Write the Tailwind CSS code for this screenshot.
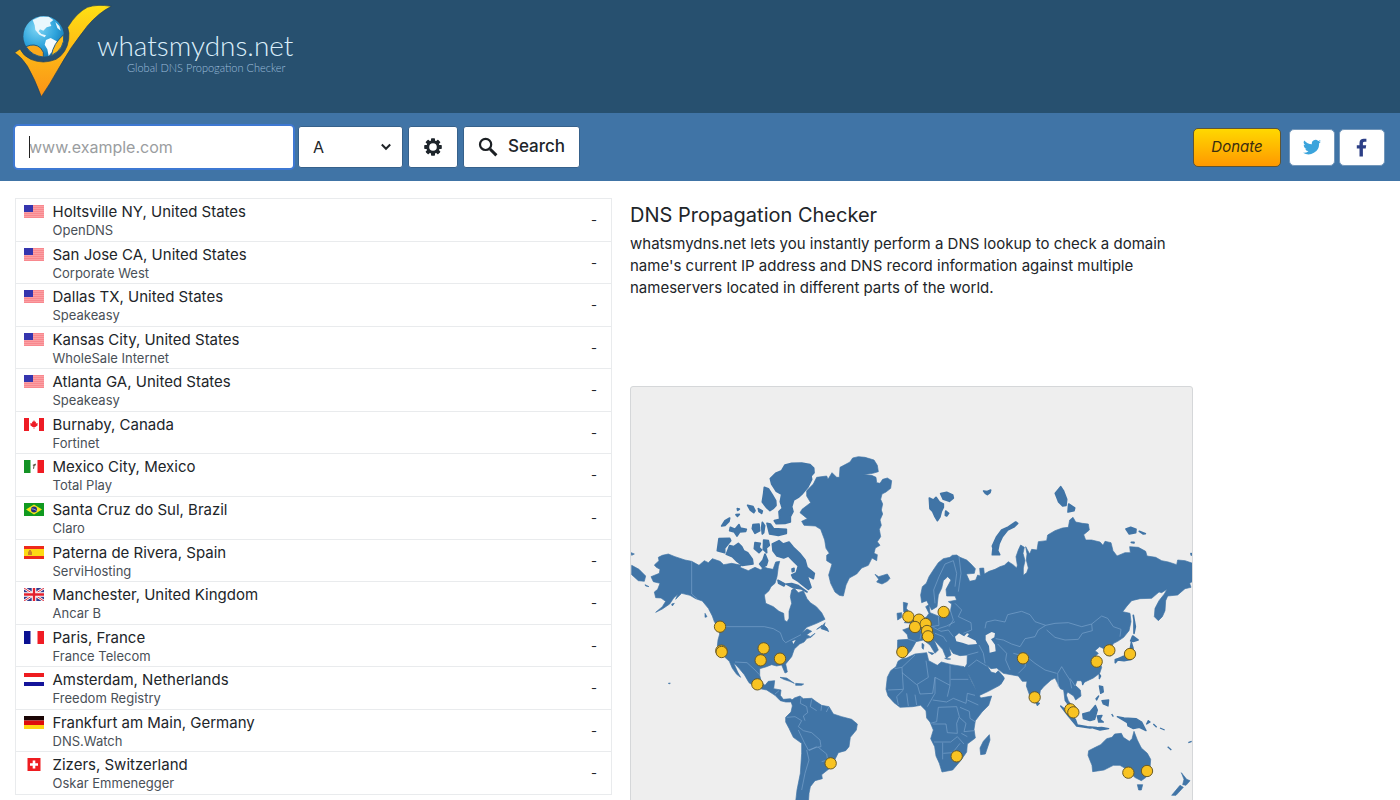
<!DOCTYPE html>
<html lang="en">
<head>
<meta charset="UTF-8">
<meta name="viewport" content="width=device-width, initial-scale=1">
<title>DNS Propagation Checker - whatsmydns.net</title>
<script src="https://cdn.jsdelivr.net/npm/@tailwindcss/browser@4"></script>
</head>
<body class="bg-white font-['Inter',sans-serif] text-[#212529]">

<!-- Header -->
<header class="h-[113px] bg-[#27506f]">
    <a href="#" class="inline-flex items-start pl-3 pt-1" aria-label="whatsmydns.net">
        <svg class="w-[100px] h-24" viewBox="36 12 300 288" aria-hidden="true">
            <defs>
                <linearGradient id="tick" x1="0" y1="0" x2="0" y2="1">
                    <stop offset="0" stop-color="#ffe014"/>
                    <stop offset="1" stop-color="#fb9217"/>
                </linearGradient>
                <radialGradient id="globe" cx=".35" cy=".3" r=".75">
                    <stop offset="0" stop-color="#7fd6f5"/>
                    <stop offset=".6" stop-color="#2fa4dc"/>
                    <stop offset="1" stop-color="#1277b4"/>
                </radialGradient>
            </defs>
            <path fill="url(#tick)" stroke="#1f405c" stroke-width="2" d="M44 158L60 147Q70 168 92 178Q130 194 168 178Q200 160 206 118Q209 98 203 82Q230 38 262 22Q290 12 334 19Q296 38 262 78Q210 142 172 212Q150 252 124 290Q104 236 82 198Q64 170 44 158Z"/>
            <circle cx="131" cy="109" r="61" fill="url(#globe)"/>
            <path fill="#e9f7fd" d="M98 60L120 50 146 50 160 60 150 68 154 78 140 82 130 92 120 88 116 94 124 102 138 106 134 112 118 104 106 90 104 76Z"/>
            <path fill="#f4fbfe" d="M138 120L152 114 170 124 176 134 164 150 152 160 146 168 142 148 134 134Z"/>
            <path fill="#e9f7fd" d="M166 66L178 78 182 92 172 84Z"/>
            <path fill="#fba91c" stroke="#24597f" stroke-width="3" d="M78 140Q104 128 122 144Q134 156 130 171Q96 168 78 140Z"/>
            <path fill="#fdbb1a" stroke="#24597f" stroke-width="3" d="M154 167Q160 130 191 104Q196 146 154 167Z"/>
        </svg>
        <span class="-ml-[15px] mt-6 flex flex-col items-end">
            <span class="font-['Lato',sans-serif] text-[28px] leading-[34px] font-light text-[#dbeefa]">whatsmydns.net</span>
            <span class="mr-2 font-['Lato',sans-serif] text-[11px] leading-3 font-light text-[#9dbddb]">Global DNS Propogation Checker</span>
        </span>
    </a>
</header>

<!-- Search bar -->
<div class="flex h-17 items-center justify-between bg-[#4074a6] px-[15px]">
    <form class="flex items-center gap-[5px]" onsubmit="return false">
        <div class="relative">
            <input type="text" aria-label="Domain name" placeholder="www.example.com" class="block h-[42px] w-[278px] rounded-[3px] bg-white px-3.5 text-base text-[#212529] shadow-[0_0_0_2px_#3e78d2] outline-none placeholder:text-[#9a9da0]">
            <span class="absolute left-3.5 top-2.5 h-5.5 w-px bg-[#222]"></span>
        </div>
        <div class="relative">
            <select aria-label="Record type" class="block h-[42px] w-[105px] appearance-none rounded-[3px] border border-[#36618b] bg-white px-3.5 text-base text-[#212529]">
                <option>A</option>
                <option>AAAA</option>
                <option>CNAME</option>
                <option>MX</option>
                <option>NS</option>
                <option>TXT</option>
            </select>
            <svg class="pointer-events-none absolute right-3 top-[17px] h-2 w-2.5" viewBox="0 0 10 8" fill="none" stroke="#212529" stroke-width="2" aria-hidden="true"><path d="M.8 1.5L5 5.8 9.2 1.5"/></svg>
        </div>
        <button type="button" aria-label="Options" class="flex h-[42px] w-[50px] items-center justify-center rounded-[3px] border border-[#36618b] bg-white">
            <svg class="size-[18px]" viewBox="-9 -9 18 18" aria-hidden="true">
                <g fill="#1e252b">
                    <rect x="-2" y="-8.8" width="4" height="17.6" rx=".8"/>
                    <rect x="-2" y="-8.8" width="4" height="17.6" rx=".8" transform="rotate(45)"/>
                    <rect x="-2" y="-8.8" width="4" height="17.6" rx=".8" transform="rotate(90)"/>
                    <rect x="-2" y="-8.8" width="4" height="17.6" rx=".8" transform="rotate(135)"/>
                    <circle r="6.7"/>
                </g>
                <circle r="3.8" fill="#fff"/>
            </svg>
        </button>
        <button type="submit" class="flex h-[42px] w-[117px] items-center justify-center gap-2.5 rounded-[3px] border border-[#36618b] bg-white text-[17px] font-medium text-[#212529]">
            <svg class="size-5" viewBox="0 0 20 20" fill="none" stroke="#1b1f23" aria-hidden="true"><circle cx="7.6" cy="7.4" r="5.6" stroke-width="2.2"/><path stroke-width="3" d="M12 12l6.400 6.400"/></svg>
            Search
        </button>
    </form>
    <div class="flex items-center gap-1">
        <button type="button" class="mr-1 h-[39px] w-[88px] rounded-[5px] border border-[#5f5534] bg-linear-to-b from-[#ffd800] to-[#ff9800] text-[15px] italic text-[#3a2e10]">Donate</button>
        <a href="#" aria-label="Twitter" class="flex h-[37px] w-[46px] items-center justify-center rounded-[5px] border border-[#7397ba] bg-white">
            <svg class="size-[18px]" viewBox="0 0 24 24" fill="#3ba4dc" aria-hidden="true"><path d="M24 4.6a10 10 0 0 1-2.8.8 4.900 4.900 0 0 0 2.200-2.700 9.900 9.900 0 0 1-3.100 1.200 4.920 4.920 0 0 0-8.400 4.500A14 14 0 0 1 1.700 3.200a4.900 4.900 0 0 0 1.500 6.500 4.900 4.900 0 0 1-2.200-.6v.1a4.900 4.900 0 0 0 3.900 4.800 5 5 0 0 1-2.200.1 4.900 4.900 0 0 0 4.600 3.400A9.900 9.900 0 0 1 0 19.500 14 14 0 0 0 21.500 7.100 10 10 0 0 0 24 4.600z"/></svg>
        </a>
        <a href="#" aria-label="Facebook" class="flex h-[37px] w-[46px] items-center justify-center rounded-[5px] border border-[#7397ba] bg-white">
            <svg class="h-[19px] w-3" viewBox="0 0 12 19" fill="#2c3f86" aria-hidden="true"><path d="M3.500 18.500V10.600H.8V7.300h2.700V4.900C3.500 2.100 5.200.7 7.800.7c1.200 0 2.300.1 2.600.1v3H8.600c-1.400 0-1.700.7-1.700 1.700v1.800h3.300l-.5 3.300H6.900v7.900z"/></svg>
        </a>
    </div>
</div>

<!-- Flags -->
<svg class="hidden" aria-hidden="true">
    <symbol id="us" viewBox="0 0 20 13"><path fill="#fba0a4" d="M0 0h20v13H0z"/><path stroke="#f8888e" d="M0 .5h20M0 2.500h20M0 4.500h20M0 6.500h20M0 8.500h20M0 10.500h20M0 12.500h20"/><path fill="#3535ae" d="M0 0h9v7H0z"/></symbol>
    <symbol id="ca" viewBox="0 0 20 13"><path fill="#fff" d="M0 0h20v13H0z"/><path fill="#ee1c25" d="M0 0h5v13H0zM15 0h5v13h-5zM10 2l1 2 1-.4-.2 2 2-.7-.5 1.500.7.6-2.600 2H10.300V11h-.6V9H8.600L6 7l.7-.6-.5-1.500 2 .7-.2-2 1 .4z"/></symbol>
    <symbol id="mx" viewBox="0 0 20 13"><path fill="#fff" d="M0 0h20v13H0z"/><path fill="#149225" d="M0 0h6.500v13H0z"/><path fill="#f01b22" d="M13.500 0H20v13h-6.500z"/><path fill="#5d5442" d="M8.500 5l3-1.500.5 1.500-1.500 1-.5 3-1-.5.500-2.500z"/></symbol>
    <symbol id="br" viewBox="0 0 20 13"><path fill="#119a20" d="M0 0h20v13H0z"/><path fill="#f5e51b" d="M10 1.500l8 5-8 5-8-5z"/><circle cx="10" cy="6.500" r="3" fill="#22307f"/><path d="M7.500 5.800q2.500 0 5 1.700" stroke="#dfe8f0" stroke-width=".6" fill="none"/></symbol>
    <symbol id="es" viewBox="0 0 20 13"><path fill="#ee2a1c" d="M0 0h20v13H0z"/><path fill="#fddb14" d="M0 3h20v7H0z"/><path fill="#c9812c" d="M4 5.500h4V9H4zM5 4h2v2H5z"/></symbol>
    <symbol id="gb" viewBox="0 0 20 13"><path fill="#333b8c" d="M0 0h20v13H0z"/><path stroke="#fff" stroke-width="2.600" d="M0 0l20 13M20 0L0 13"/><path stroke="#e0303f" d="M0 0l20 13M20 0L0 13"/><path stroke="#fff" stroke-width="4.600" d="M10 0v13M0 6.500h20"/><path stroke="#e3202e" stroke-width="2.400" d="M10 0v13M0 6.500h20"/></symbol>
    <symbol id="fr" viewBox="0 0 20 13"><path fill="#fff" d="M0 0h20v13H0z"/><path fill="#0a1192" d="M0 0h6.500v13H0z"/><path fill="#f01c24" d="M13.500 0H20v13h-6.500z"/></symbol>
    <symbol id="nl" viewBox="0 0 20 13"><path fill="#fff" d="M0 0h20v13H0z"/><path fill="#ee1c20" d="M0 0h20v4H0z"/><path fill="#14149a" d="M0 9h20v4H0z"/></symbol>
    <symbol id="de" viewBox="0 0 20 13"><path fill="#1a0505" d="M0 0h20v4.500H0z"/><path fill="#df0d0d" d="M0 4.500h20V9H0z"/><path fill="#fdd614" d="M0 9h20v4H0z"/></symbol>
    <symbol id="ch" viewBox="0 0 20 13"><path fill="#ee1c20" d="M3.500 0h13v13h-13z"/><path fill="#fff" d="M8.700 2.500h2.600v2.700H14v2.600h-2.700v2.700H8.700V7.800H6V5.200h2.700z"/></symbol>
</svg>

<main class="grid grid-cols-[597fr_563fr_174fr] items-start gap-[18px] px-[15px] pt-[17px]">
    <!-- DNS servers -->
    <table class="h-[597px] w-full border-collapse border border-[#e9ebed]">
        <tbody id="servers"></tbody>
    </table>

    <section class="pt-[3px]">
        <h1 class="text-xl leading-7">DNS Propagation Checker</h1>
        <p class="mt-1 mb-[87px] text-[15px] leading-[22px]">whatsmydns.net lets you instantly perform a DNS lookup to check a domain name's current IP address and DNS record information against multiple nameservers located in different parts of the world.</p>

        <!-- World map -->
        <div class="overflow-hidden rounded-[3px] border border-[#d5d7d9] bg-[#eeeeee]">
            <svg class="block w-full" viewBox="18 -159 1683 1245" role="img" aria-label="Map of DNS servers">
                <g fill="#4074a6" stroke="#4074a6" stroke-width="2" stroke-linejoin="round">
                    <!-- North America -->
                    <path d="M130 342L112 346 100 352 102 362 88 375 94 382 105 388 103 400 78 410 85 425 105 430 98 448 88 456 92 473 108 474 122 484 112 500 92 517 112 507 134 492 146 474 158 463 152 478 170 460 195 466 212 476 232 483 250 505 262 528 268 545 280 562 284 582 279 600 277 618 285 634 300 652 313 664 322 685 335 703 347 712 338 696 330 678 326 668 342 685 358 704 372 728 395 744 425 750 450 766 466 782 482 786 499 786 502 794 510 784 496 776 475 778 466 766 468 750 446 746 449 722 430 724 420 736 410 728 404 706 404 686 422 681 440 674 455 678 470 675 480 699 487 696 482 672 500 650 508 627 524 612 537 606 546 595 558 592 570 580 556 590 545 584 560 574 546 567 530 580 545 562 575 550 600 538 590 518 574 500 556 488 546 476 535 452 520 458 508 445 500 450 496 470 500 490 492 514 492 535 486 546 478 540 476 520 462 514 445 500 422 490 418 465 432 452 438 440 450 430 456 410 460 380 464 364 452 366 444 388 428 385 415 380 408 390 390 382 370 392 345 382 350 376 320 370 296 374 285 364 262 356 250 368 238 362 222 376 200 364 180 360 150 350Z"/>
                    <path d="M575 568L592 555 588 566 606 572 611 575 607 565 598 556 600 548 590 560ZM240 520L246 530 240 532ZM140 492L148 490 142 498Z"/>
                    <!-- Arctic islands -->
                    <path stroke-width="5" d="M480 75L500 70 530 69 555 74 566 84 567 98 558 108 560 118 548 142 533 160 520 172 506 180 500 200 504 215 496 230 496 246 480 250 454 251 448 242 464 238 462 215 472 205 466 185 470 163 454 154 440 132 436 116 452 100 470 92ZM418 142L430 146 442 165 452 182 453 196 444 206 435 212 424 202 412 186 416 160ZM426 250L436 252 446 266 484 268 484 280 460 286 434 282ZM282 296L314 295 317 302 299 325 299 338 277 332ZM314 317L326 320 340 310 350 320 356 332 368 338 382 358 384 372 352 376 336 364 322 350 304 343 309 330ZM442 312L462 302 474 312 492 306 505 322 524 340 540 360 546 382 568 400 565 416 546 406 552 424 558 442 550 448 532 434 520 424 504 414 500 405 514 398 520 378 506 364 490 348 476 354 456 348 444 332ZM316 262L330 268 342 254 346 264 364 268 362 274 344 276 336 288 328 276 314 272ZM290 258L300 242 314 234 312 244 300 256ZM384 254L402 252 404 272 390 280 382 266ZM368 196L384 200 390 212 386 218 376 210ZM400 206L412 213 410 220 402 215ZM390 308L406 310 402 322 410 330 402 338 388 326ZM416 300L430 302 433 316 424 324 425 338 415 328ZM420 342L428 362 424 376 412 382 404 372 414 360ZM412 247L419 257 416 278 412 282 410 262ZM337 206L343 207 338 211ZM333 224L343 223 337 229ZM501 387L507 385 507 393 502 395ZM459 421L480 432 477 438 461 430ZM484 432L500 431 520 437 546 456 530 447 505 443Z"/>
                    <path d="M20 376L42 388 62 408 58 424 40 422 20 404ZM18 338L28 342 20 346ZM60 434L72 440 62 438ZM130 730L136 729 133 732ZM465 712L485 714 508 730 494 724 476 718ZM512 730L536 732 530 736 512 736Z"/>
                    <!-- Greenland, Iceland, Svalbard -->
                    <g transform="translate(525 0)">
                        <path d="M158 54L175 50 195 52 222 60 232 76 235 95 218 100 190 104 215 106 228 112 230 128 240 130 248 118 262 114 275 122 272 145 258 156 246 162 242 178 248 192 244 210 248 222 240 240 244 256 238 268 242 290 232 305 240 316 226 324 222 340 232 344 230 362 216 354 205 376 185 384 170 402 148 414 138 435 130 468 118 466 105 456 92 430 86 405 96 372 80 362 80 346 88 340 78 325 74 300 62 268 46 258 12 256 5 244 22 236 0 218 6 208 32 188 20 168 20 152 40 132 50 112 80 108 84 118 96 98 110 112 118 112 120 82 150 66ZM225 403L236 410 262 402 270 415 262 424 246 432 230 426 236 418Z"/>
                        <path stroke-width="5" d="M388 174L400 180 408 172 418 186 430 192 430 202 424 214 420 230 412 242 404 228 398 214 390 206ZM422 161L440 157 458 165 460 174 448 184 430 178ZM437 213L446 220 440 228 436 226ZM551 153L560 155 572 150 570 158 562 164 556 160Z"/>
                    </g>
                    <!-- Eurasia -->
                    <path d="M887 465L892 440 904 430 912 410 925 390 940 368 955 356 975 352 982 346 995 345 1005 352 1025 360 1038 372 1051 386 1048 400 1024 402 1034 424 1052 420 1058 405 1066 408 1064 385 1076 384 1078 402 1092 394 1110 388 1125 380 1138 376 1150 365 1164 374 1175 384 1177 376 1173 350 1180 330 1187 315 1198 322 1194 340 1200 362 1195 384 1195 406 1205 398 1210 384 1204 360 1206 342 1202 320 1214 342 1220 328 1236 330 1240 305 1265 302 1268 285 1290 272 1312 264 1330 262 1334 240 1344 232 1352 246 1372 250 1390 252 1393 270 1376 284 1382 300 1400 300 1425 306 1434 316 1440 304 1458 308 1464 332 1476 348 1500 338 1516 338 1514 320 1540 322 1562 334 1566 348 1592 352 1610 362 1630 366 1655 374 1658 360 1680 362 1703 370 1703 424 1694 430 1698 442 1680 446 1658 465 1628 468 1622 482 1620 512 1612 530 1600 542 1588 530 1590 505 1602 482 1618 462 1626 448 1610 458 1602 456 1580 475 1545 476 1520 482 1506 498 1493 515 1515 520 1518 545 1512 572 1496 592 1478 604 1466 610 1458 622 1468 640 1456 648 1444 645 1440 628 1424 620 1410 632 1420 640 1412 648 1424 665 1430 682 1424 700 1405 714 1375 728 1368 722 1356 722 1351 736 1366 750 1368 768 1352 780 1346 768 1328 756 1324 765 1330 782 1340 796 1336 804 1320 782 1316 750 1306 746 1298 730 1290 714 1278 720 1256 740 1246 752 1242 778 1230 790 1216 772 1204 738 1206 724 1192 724 1180 708 1135 700 1115 684 1098 686 1086 676 1098 696 1112 700 1120 692 1137 712 1124 736 1090 754 1060 768 1048 738 1032 706 1018 684 1026 672 1027 645 1005 647 984 640 972 622 978 645 964 655 953 628 927 600 940 630 930 640 915 615 895 600 873 605 858 632 845 645 830 650 817 640 818 600 850 598 847 584 833 570 855 562 870 548 890 540 905 530 912 520 902 500 912 494 915 518 945 530 976 515 980 492 970 485 995 480 990 468 965 468 963 448 978 420 968 410 955 422 950 445 940 465 936 500 920 510 905 482 890 488Z"/>
                    <!-- British Isles -->
                    <path d="M835 487L848 490 844 505 860 525 870 540 862 550 838 548 850 535 836 515ZM816 520L830 518 830 532 818 540Z"/>
                    <path stroke-width="5" d="M1102 344L1104 325 1102 318 1114 292 1130 270 1150 261 1172 246 1178 250 1168 260 1148 270 1132 290 1122 312 1118 332 1124 344Z"/>
                    <!-- Siberian islands and Far East -->
                    <g transform="translate(1125 0)">
                        <path stroke-width="5" d="M182 140L190 152 200 178 198 196 188 198 176 186 166 160ZM206 192L224 204 222 212 204 216ZM378 267L392 262 408 268 407 278 388 282ZM418 274L436 281 430 282ZM394 307L402 307 402 309ZM400 526L406 560 402 580 402 540ZM398 588L414 600 400 604 392 603ZM394 608L399 625 393 658 372 662 347 659 368 650 388 645ZM346 659L351 662 346 668ZM573 341L577 342 574 345Z"/>
                        <path stroke-width="4" d="M246 720L252 726 248 734ZM298 702L302 708 298 716ZM298 738L308 740 310 756 302 760ZM306 782L326 780 324 798 310 792ZM288 776L296 768 290 780ZM108 786L118 790 112 796ZM0 708L12 716 2 732ZM182 798L205 815 226 838 232 855 262 860 290 862 270 864 230 858 205 828ZM248 822L270 816 286 796 292 810 284 838 270 842 250 836ZM292 828L306 826 300 838 310 846 296 846ZM280 864L305 862 326 866 300 870ZM352 830L372 834 408 836 425 846 438 872 418 862 400 866 384 858 382 848ZM445 842L450 846 440 852Z"/>
                        <path d="M335 822L340 830M460 852L470 862M480 864L494 870M503 920L514 930M565 908L575 904" fill="none" stroke-width="4"/>
                        <!-- Australia and New Zealand -->
                        <path d="M266 932L286 922 302 914 320 896 336 892 344 882 364 880 370 892 388 904 396 896 402 874 412 900 424 924 442 940 452 958 450 985 438 1012 424 1022 404 1012 384 990 360 976 340 976 312 990 278 995 276 976 264 946ZM412 1034L428 1034 424 1050 416 1050ZM544 998L560 1018 570 1022 558 1036 548 1034 552 1018ZM540 1036L550 1042 528 1066 515 1066Z"/>
                    </g>
                    <!-- South America -->
                    <g transform="translate(0 480)">
                        <path d="M499 302L508 294 525 288 535 296 560 295 575 306 590 316 612 320 625 342 650 350 680 358 697 372 694 390 676 412 672 440 662 452 640 458 628 482 618 502 600 516 590 524 592 536 570 542 556 560 552 580 548 640 508 640 516 570 526 520 530 460 530 430 505 412 492 385 482 366 482 352 498 336 502 318Z"/>
                    </g>
                    <!-- Africa and Madagascar -->
                    <g transform="translate(705 450)">
                        <path d="M126 206L140 204 165 192 200 188 206 212 232 226 244 216 275 224 312 230 322 246 335 275 352 306 362 324 395 318 386 346 366 366 346 392 342 418 346 444 322 462 320 486 302 512 278 540 246 546 238 520 228 498 224 470 212 446 220 420 210 396 200 384 198 362 182 346 158 350 120 352 102 338 84 318 78 298 82 262 92 242 108 230 114 214ZM388 434L390 450 376 492 362 494 360 474 370 454ZM186 160L192 164 190 178 186 174ZM205 186L222 190 216 194ZM254 205L272 207 262 208Z"/>
                    </g>
                </g>
                <g fill="#eeeeee">
                    <path d="M994 604L990 590 1002 580 1016 588 1028 590 1052 602 1056 612 1030 614 1012 608ZM1018 588L1026 580 1032 582 1026 590ZM1082 586L1100 576 1110 580 1108 592 1098 598 1110 614 1112 634 1094 638 1092 618 1082 600Z"/>
                    <path d="M472 424L480 428 476 420ZM505 612L512 600 502 604Z"/>
                </g>
                <!-- Borders -->
                <g fill="none" stroke="#7ea6cf" stroke-opacity=".75" stroke-width="2.500" stroke-linejoin="round">
                    <path d="M200 364V462L218 478M300 560H418L445 566 466 578 474 600 482 608 505 596 528 584M330 666L366 668 390 690 403 704M450 762L462 752"/>
                    <path d="M528 772L526 790 545 800 548 818 535 828 540 842M560 778L556 800 575 812M590 796L588 812M612 800L604 816M485 832L510 830 530 842 520 860 535 872 560 878 585 900 588 920 575 922 550 930 538 908 520 870M545 930L552 960 540 1000 530 1050M580 922L605 942 608 960 590 965M552 932L575 920"/>
                    <path d="M930 490L926 450 942 410 960 372 985 362M985 362L995 400 990 440M1002 350L1008 400 1000 455M940 530L942 556 918 560M975 508L985 540 972 560M990 490L1010 510 1000 530 1038 548 1040 570 1015 580M990 545L965 558 940 566M925 562L948 574 970 570 985 590M930 580L955 590 965 605M870 560L890 575 885 598M850 598L872 604"/>
                    <path d="M1080 565L1084 546 1110 540 1140 546 1148 524 1190 514 1215 524 1230 545 1262 556 1240 570 1230 590 1200 596 1185 620 1160 612 1135 600 1112 596M1262 556L1290 550 1330 548 1370 560 1400 552 1402 572 1372 580 1360 598 1320 600 1290 592 1265 570M1400 552L1430 528 1448 535 1465 560 1488 568 1485 590M1118 612L1145 640 1142 660 1155 690M1165 640L1205 650 1200 680 1180 700M1205 650L1230 670 1260 690 1295 700M1062 615L1075 640 1080 670M1027 645L1060 636M1030 680L1055 660 1085 678M1300 740L1298 700 1310 680 1322 700 1335 720 1340 745M1335 715L1350 738"/>
                    <g transform="translate(705 450)">
                        <path d="M104 236L126 232 165 195M126 232L130 298 84 300M126 248L170 284 205 262 198 212M172 284L180 312 218 310 225 262 270 286 270 226M225 262V310L202 350M272 268H325M130 300L110 320 115 345M140 310L145 348M165 314L170 345M218 330L260 336 280 325 318 340 322 310 345 316M270 286L262 320M235 352L230 395 212 400M235 352L290 350 298 380 290 400 292 430 262 428 258 402 218 402M300 352L328 364 330 385 345 395M298 382L318 400 312 425 342 422M222 456H272L292 440 312 462M248 458V508M250 490L278 488 300 460M322 330L355 345M322 440L304 430"/>
                    </g>
                </g>
                <!-- Servers -->
                <g id="pins" fill="#f8c322" stroke="#6b5a24" stroke-width="3"></g>
            </svg>
        </div>
    </section>
</main>

<script>
const servers = [
    ['us', 'Holtsville NY, United States', 'OpenDNS'],
    ['us', 'San Jose CA, United States', 'Corporate West'],
    ['us', 'Dallas TX, United States', 'Speakeasy'],
    ['us', 'Kansas City, United States', 'WholeSale Internet'],
    ['us', 'Atlanta GA, United States', 'Speakeasy'],
    ['ca', 'Burnaby, Canada', 'Fortinet'],
    ['mx', 'Mexico City, Mexico', 'Total Play'],
    ['br', 'Santa Cruz do Sul, Brazil', 'Claro'],
    ['es', 'Paterna de Rivera, Spain', 'ServiHosting'],
    ['gb', 'Manchester, United Kingdom', 'Ancar B'],
    ['fr', 'Paris, France', 'France Telecom'],
    ['nl', 'Amsterdam, Netherlands', 'Freedom Registry'],
    ['de', 'Frankfurt am Main, Germany', 'DNS.Watch'],
    ['ch', 'Zizers, Switzerland', 'Oskar Emmenegger']
];

document.getElementById('servers').innerHTML = servers.map(([flag, place, provider]) => `
    <tr class="border-b border-[#e9ebed]">
        <td class="w-[37px] pl-2 pt-1.5 align-top"><svg class="block h-[13px] w-5"><use href="#${flag}"/></svg></td>
        <td class="pt-[3px] align-top">
            <div class="text-[15px] leading-5">${place}</div>
            <div class="text-[13px] leading-4 text-[#495057]">${provider}</div>
        </td>
        <td class="w-10 pr-3.5 pt-0.5 text-right text-[13px]">-</td>
    </tr>`).join('');

const pins = [
    [285, 560], [289, 632], [290, 636], [416, 625], [407, 661], [465, 656], [397, 733], [617, 970],
    [850, 530], [882, 539], [870, 561], [902, 552], [906, 573], [909, 589], [956, 516], [832, 636],
    [995, 949], [1194, 655], [1229, 772], [1336, 808], [1345, 817], [1415, 665], [1453, 631],
    [1515, 642], [1510, 998], [1566, 993]
];

document.getElementById('pins').innerHTML = pins.map(([x, y]) => `<circle cx="${x}" cy="${y}" r="17"/>`).join('');
</script>

</body>
</html>
